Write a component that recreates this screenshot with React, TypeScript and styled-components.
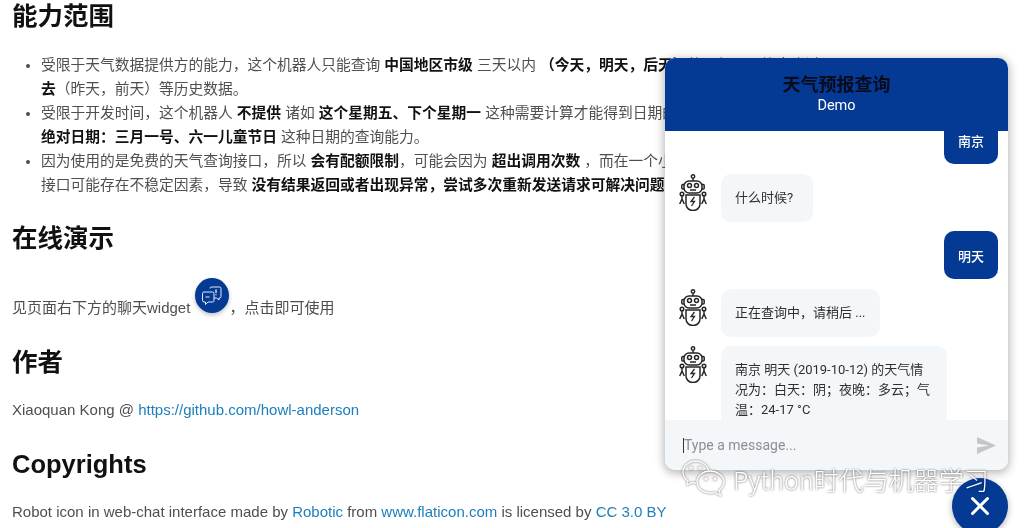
import React from "react";
import styled, { createGlobalStyle } from "styled-components";

const brand = "#043a94";

const GlobalStyle = createGlobalStyle`
  html, body {
    margin: 0;
    padding: 0;
    background: #fff;
  }
  body {
    width: 1024px;
    height: 528px;
    overflow: hidden;
    font-family: "Liberation Sans", "Noto Sans CJK SC", sans-serif;
  }
`;

const RobotIcon = () => (
  <svg width="28" height="37" viewBox="0 0 28 37" fill="none" stroke="#262626" strokeWidth="1.5">
    <circle cx="14" cy="2.500" r="1.700" />
    <path d="M14 4.200V7" />
    <rect x="5" y="7" width="18" height="12" rx="5" />
    <path d="M5 10.500H3.800a1 1 0 0 0-1 1v2.500a1 1 0 0 0 1 1H5M23 10.500h1.200a1 1 0 0 1 1 1v2.500a1 1 0 0 1-1 1H23" />
    <circle cx="10.500" cy="11.500" r="2" />
    <circle cx="17.500" cy="11.500" r="2" />
    <path d="M11 16h6" />
    <path d="M7 21h14v9a7 6.500 0 0 1-14 0z" />
    <path d="M15.500 23l-3.500 4.500h3.500L12.500 32" strokeWidth="1.300" />
    <circle cx="3" cy="20" r="1.800" />
    <circle cx="25" cy="20" r="1.800" />
    <path d="M3 22v3l-2.300 5M3 25l2.300 5M25 22v3l-2.300 5M25 25l2.300 5" />
  </svg>
);

const ChatGlyph = () => (
  <svg width="22" height="20" viewBox="0 0 22 20" fill="none" stroke="#fff" strokeWidth="0.900">
    <path d="M9 2.500A1.500 1.500 0 0 1 10.500 1h8A1.500 1.500 0 0 1 20 2.500v8a1.500 1.500 0 0 1-1.500 1.500H18v2l-2.500-2H13" />
    <path d="M3 6h8.500A1.500 1.500 0 0 1 13 7.500v7a1.500 1.500 0 0 1-1.500 1.500H7l-2.500 2.500V16H3a1.500 1.500 0 0 1-1.500-1.500v-7A1.500 1.500 0 0 1 3 6z" />
    <path d="M15 3.500v3.500M15 8.200v1" strokeWidth="1.200" />
    <path d="M4.500 11h4" />
  </svg>
);

const SendIcon = () => (
  <svg width="19" height="17" viewBox="0 0 19 17" fill="#c4c7ca">
    <path d="M0 0l19 8.500L0 17V10.500l12-2-12-2z" />
  </svg>
);

const CloseIcon = () => (
  <svg width="20" height="20" viewBox="0 0 20 20" stroke="#fff" strokeWidth="3" strokeLinecap="round">
    <path d="M2.500 2.500l15 15M17.500 2.500l-15 15" />
  </svg>
);

const WechatIcon = () => (
  <svg width="44" height="38" viewBox="0 0 44 38" fill="none" stroke="#fff" strokeWidth="1.300">
    <path d="M27 11C25 5 20 1 14 1 7 1 1 6 1 12c0 4 2 7 5 9l-1 4 5-2.500c1 .3 2.500.5 4 .5" />
    <path d="M15 22c0-6 6-11 13-11s14 5 14 11c0 4-2 6-5 8.500l1.500 5-5.500-3c-1.500.5-3 .5-5 .5-7 0-13-5-13-11z" />
    <circle cx="9" cy="8" r="1.200" />
    <circle cx="18" cy="8" r="1.200" />
    <circle cx="24" cy="19" r="1" />
    <circle cx="33" cy="19" r="1" />
  </svg>
);

const App: React.FC = () => (
  <Page>
    <GlobalStyle />
    <Article>
      <Heading>能力范围</Heading>
      <List>
        <li>
          受限于天气数据提供方的能力，这个机器人只能查询 <b>中国地区市级</b> 三天以内 <b>（今天，明天，后天）</b>的天气，不能查询过
          <br />
          <b>去</b>（昨天，前天）等历史数据。
        </li>
        <li>
          受限于开发时间，这个机器人 <b>不提供</b> 诸如 <b>这个星期五、下个星期一</b> 这种需要计算才能得到日期的查询，也不提供
          <br />
          <b>绝对日期：三月一号、六一儿童节日</b> 这种日期的查询能力。
        </li>
        <li>
          因为使用的是免费的天气查询接口，所以 <b>会有配额限制</b>，可能会因为 <b>超出调用次数</b> ，而在一个小时内无法使用，
          <br />
          接口可能存在不稳定因素，导致 <b>没有结果返回或者出现异常，尝试多次重新发送请求可解决问题</b>
        </li>
      </List>
      <DemoHeading>在线演示</DemoHeading>
      <DemoLine>
        见页面右下方的聊天widget
        <InlineBadge>
          <ChatGlyph />
        </InlineBadge>
        ，点击即可使用
      </DemoLine>
      <SectionHeading>作者</SectionHeading>
      <Line>
        Xiaoquan Kong @ <Link href="#">https://github.com/howl-anderson</Link>
      </Line>
      <SectionHeading>Copyrights</SectionHeading>
      <Line>
        Robot icon in web-chat interface made by <Link href="#">Robotic</Link> from{" "}
        <Link href="#">www.flaticon.com</Link> is licensed by <Link href="#">CC 3.0 BY</Link>
      </Line>
    </Article>

    <Widget>
      <Header>
        <Title>天气预报查询</Title>
        <Subtitle>Demo</Subtitle>
      </Header>
      <Messages>
        <UserBubble>南京</UserBubble>
        <BotRow>
          <RobotIcon />
          <BotBubble>什么时候?</BotBubble>
        </BotRow>
        <UserBubble>明天</UserBubble>
        <BotRow>
          <RobotIcon />
          <BotBubble>正在查询中，请稍后 ...</BotBubble>
        </BotRow>
        <BotRow>
          <RobotIcon />
          <BotBubble>南京 明天 (2019-10-12) 的天气情况为：白天：阴；夜晚：多云；气温：24-17 °C</BotBubble>
        </BotRow>
      </Messages>
      <Composer>
        <Caret />
        <Placeholder>Type a message...</Placeholder>
        <SendIcon />
      </Composer>
    </Widget>

    <Launcher>
      <CloseIcon />
    </Launcher>

    <Watermark>
      <WechatIcon />
      <WatermarkText>Python时代与机器学习</WatermarkText>
    </Watermark>
  </Page>
);

const Page = styled.div`
  position: relative;
  width: 1024px;
  height: 528px;
  overflow: hidden;
  background: #fff;
  filter: blur(0.35px);
`;

const Article = styled.div`
  padding: 0 0 0 12px;
  width: 760px;
  color: #4f4f4f;
  font-size: 15px;
  white-space: nowrap;

  b {
    color: #111;
    font-weight: 700;
  }
`;

const Heading = styled.h2`
  margin: 0;
  font-size: 25.500px;
  line-height: 32px;
  font-weight: 700;
  color: #111;
`;

const List = styled.ul`
  margin: 21px 0 0;
  padding: 0 0 0 29px;
  font-size: 14.750px;
  line-height: 24px;

  li::marker {
    font-size: 13px;
  }
`;

const SectionHeading = styled(Heading)`
  margin-top: 26px;
`;

const DemoHeading = styled(Heading)`
  margin-top: 25px;
`;

const DemoLine = styled.div`
  margin-top: 21px;
  height: 45px;
  display: flex;
  align-items: flex-end;
  line-height: 24px;
`;

const InlineBadge = styled.span`
  flex: none;
  width: 34px;
  height: 35px;
  margin: 0 0 7px 5px;
  border-radius: 50%;
  background: ${brand};
  box-shadow: 0 2px 4px rgba(0, 0, 0, 0.25);
  display: flex;
  align-items: center;
  justify-content: center;
`;

const Line = styled.div`
  margin-top: 20px;
  line-height: 24px;
`;

const Link = styled.a`
  color: #1b7fbd;
  text-decoration: none;
`;

const Widget = styled.div`
  position: absolute;
  left: 665px;
  top: 58px;
  width: 343px;
  height: 412px;
  display: flex;
  flex-direction: column;
  border-radius: 10px;
  overflow: hidden;
  background: #fff;
  box-shadow: 0 2px 10px 1px rgba(0, 0, 0, 0.3);
  font-family: Roboto, "Noto Sans CJK SC", sans-serif;
`;

const Header = styled.div`
  position: relative;
  z-index: 1;
  flex: none;
  height: 73px;
  box-sizing: border-box;
  padding-top: 16px;
  background: ${brand};
  text-align: center;
`;

const Title = styled.div`
  font-size: 18px;
  line-height: 21px;
  font-weight: 700;
  color: #0b0b1c;
`;

const Subtitle = styled.div`
  font-size: 14.500px;
  line-height: 21px;
  font-weight: 400;
  color: #fff;
`;

const Messages = styled.div`
  flex: 1;
  min-height: 0;
  overflow: hidden;
  display: flex;
  flex-direction: column;
  gap: 9.500px;
  padding: 0 10px 0 14px;
  margin-top: -15px;
`;

const UserBubble = styled.div`
  align-self: flex-end;
  width: 54px;
  height: 48px;
  flex: none;
  display: flex;
  align-items: center;
  justify-content: center;
  border-radius: 10px;
  background: ${brand};
  color: #fff;
  font-size: 13px;
  font-weight: 500;
`;

const BotRow = styled.div`
  display: flex;
  align-items: flex-start;
  gap: 14px;
  flex: none;
`;

const BotBubble = styled.div`
  min-width: 64px;
  max-width: 198px;
  padding: 14px 14px;
  border-radius: 10px;
  background: #f4f7f9;
  color: #2f2f2f;
  font-size: 13px;
  line-height: 20px;
`;

const Composer = styled.div`
  position: relative;
  flex: none;
  height: 50px;
  box-sizing: border-box;
  display: flex;
  align-items: center;
  padding: 0 12px 0 18px;
  background: #f4f7f9;
`;

const Caret = styled.span`
  width: 1px;
  height: 15px;
  background: #333;
`;

const Placeholder = styled.span`
  flex: 1;
  font-size: 14px;
  color: #8b8f94;
`;

const Launcher = styled.div`
  position: absolute;
  left: 952px;
  top: 478px;
  width: 56px;
  height: 56px;
  border-radius: 50%;
  background: ${brand};
  box-shadow: 0 2px 6px rgba(0, 0, 0, 0.3);
  display: flex;
  align-items: center;
  justify-content: center;
`;

const Watermark = styled.div`
  position: absolute;
  left: 682px;
  top: 460px;
  display: flex;
  align-items: center;
  gap: 7px;
  filter: drop-shadow(0 0 1px rgba(0, 0, 0, 0.6));
`;

const WatermarkText = styled.span`
  font-family: "Noto Sans CJK SC", sans-serif;
  font-size: 25px;
  font-weight: 300;
  color: #fff;
  white-space: nowrap;
`;

export default App;
